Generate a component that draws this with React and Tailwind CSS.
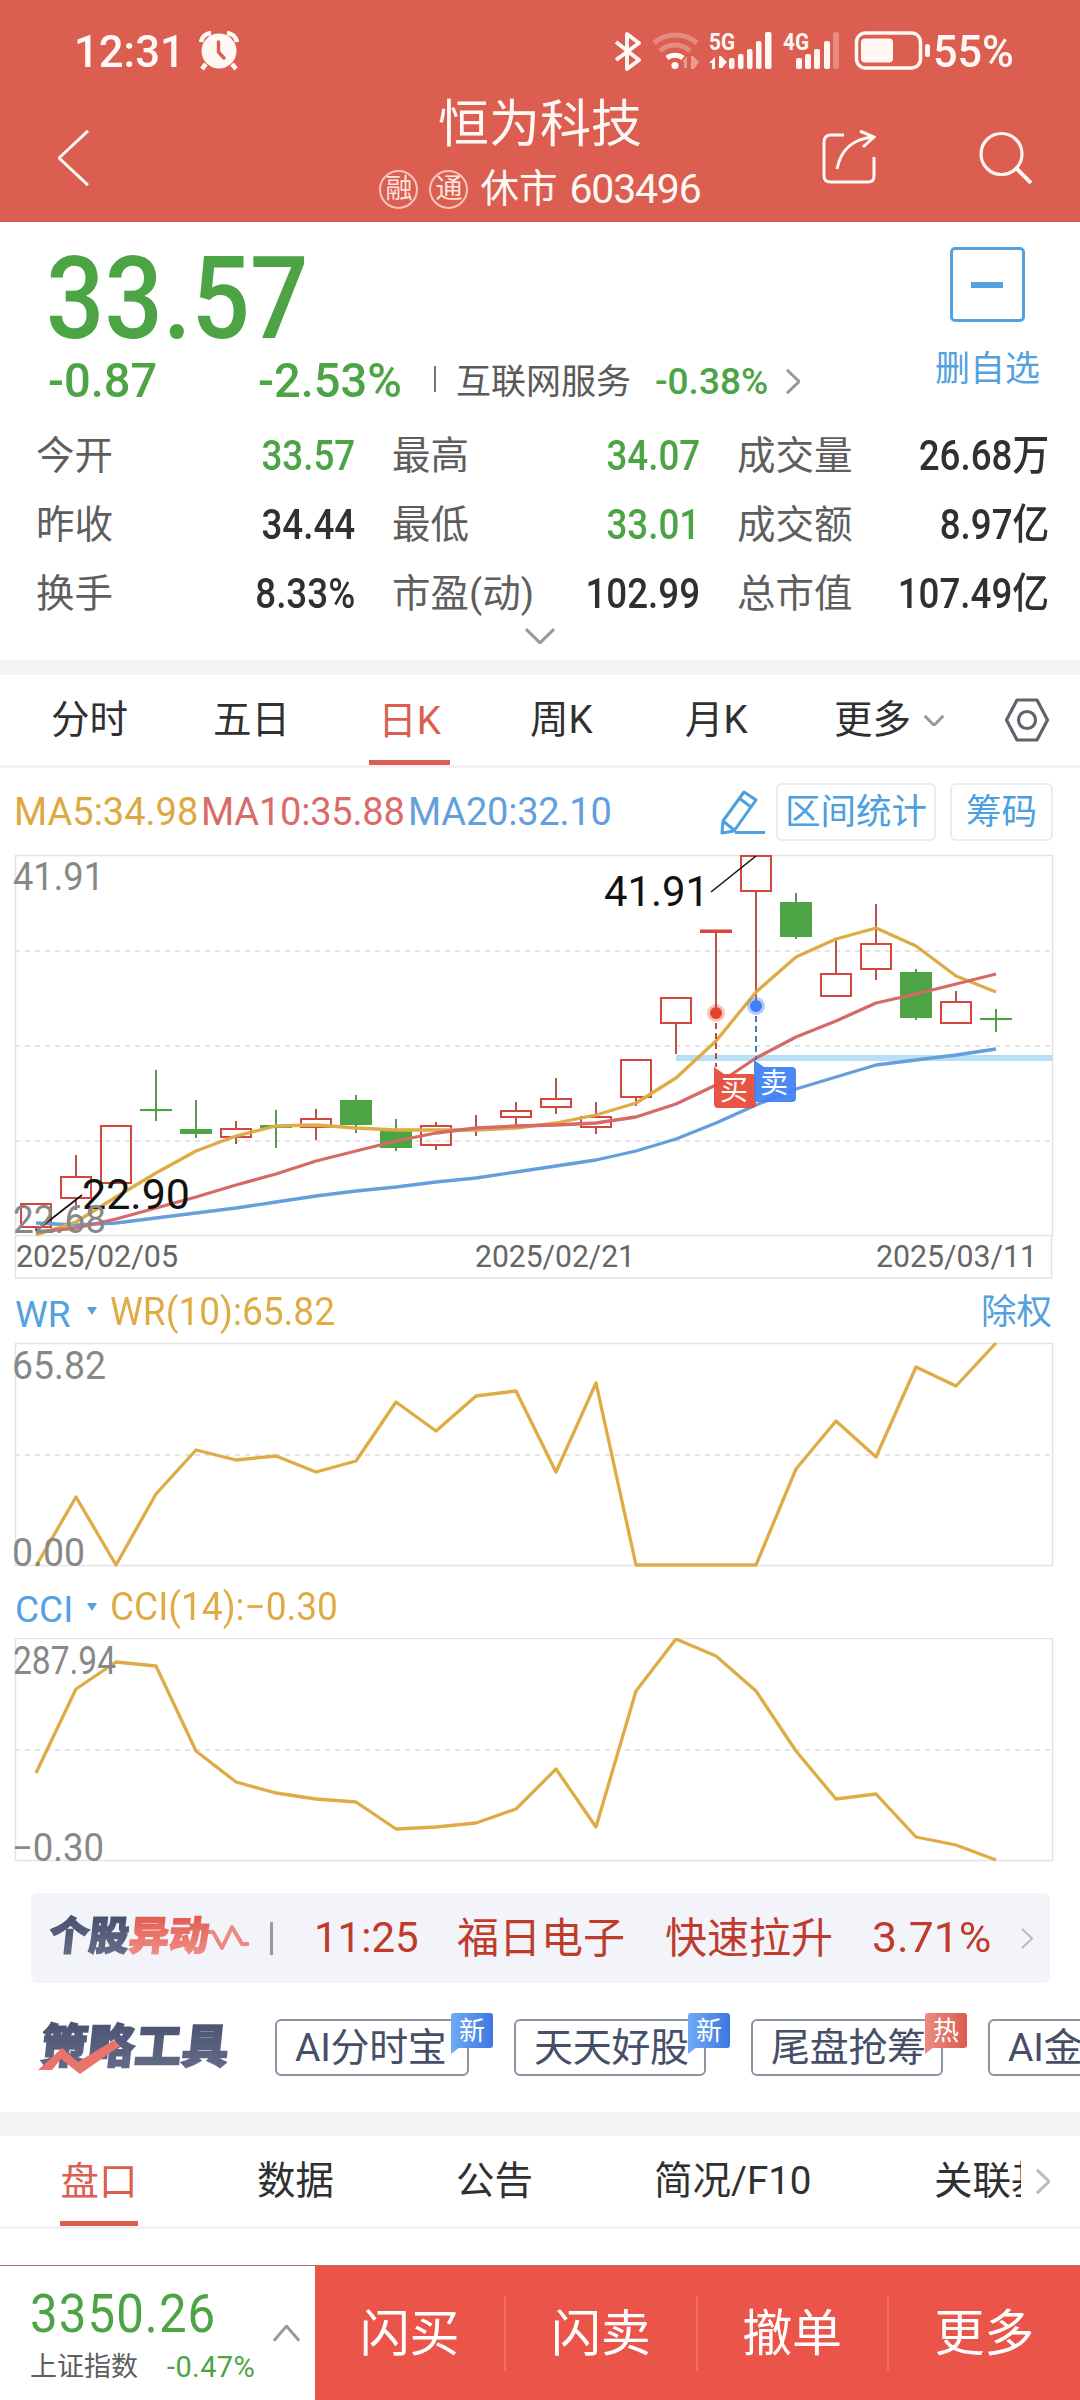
const candles = [
    { up: true, high: 1204, top: 1204, bottom: 1227, low: 1231 },
    { up: true, high: 1155, top: 1177, bottom: 1198, low: 1210 },
    { up: true, high: 1126, top: 1126, bottom: 1183, low: 1183 },
    { up: false, high: 1070, top: 1109, bottom: 1111, low: 1121 },
    { up: false, high: 1100, top: 1129, bottom: 1134, low: 1138 },
    { up: true, high: 1121, top: 1129, bottom: 1137, low: 1144 },
    { up: false, high: 1110, top: 1125, bottom: 1128, low: 1148 },
    { up: true, high: 1109, top: 1119, bottom: 1127, low: 1140 },
    { up: false, high: 1095, top: 1100, bottom: 1125, low: 1133 },
    { up: false, high: 1119, top: 1131, bottom: 1148, low: 1151 },
    { up: true, high: 1122, top: 1126, bottom: 1145, low: 1150 },
    { up: true, high: 1115, top: 1129, bottom: 1130, low: 1136 },
    { up: true, high: 1102, top: 1111, bottom: 1117, low: 1129 },
    { up: true, high: 1078, top: 1099, bottom: 1107, low: 1114 },
    { up: true, high: 1102, top: 1117, bottom: 1127, low: 1134 },
    { up: true, high: 1060, top: 1060, bottom: 1097, low: 1106 },
    { up: true, high: 998, top: 998, bottom: 1023, low: 1054 },
    { up: true, high: 931, top: 930.5, bottom: 932, low: 1013 },
    { up: true, high: 856, top: 856, bottom: 891, low: 1006 },
    { up: false, high: 893, top: 902, bottom: 937, low: 939 },
    { up: true, high: 939, top: 974, bottom: 996, low: 996 },
    { up: true, high: 904, top: 944, bottom: 969, low: 980 },
    { up: false, high: 969, top: 972, bottom: 1018, low: 1020 },
    { up: true, high: 991, top: 1002, bottom: 1023, low: 1023 },
    { up: false, high: 1009, top: 1018, bottom: 1020, low: 1032 },
];

const ma5 = [1235, 1222, 1197, 1173, 1151, 1136, 1126, 1125, 1128, 1130, 1130, 1130, 1128, 1123, 1115, 1103, 1078, 1041, 992, 957, 939, 928, 946, 976, 992];
const ma10 = [1232, 1228, 1219, 1208, 1197, 1185, 1174, 1161, 1151, 1141, 1133, 1128, 1126, 1125, 1123, 1117, 1104, 1085, 1058, 1037, 1021, 1003, 994, 984, 974];
const ma20 = [1223, 1225, 1223, 1218, 1213, 1208, 1202, 1196, 1191, 1187, 1182, 1178, 1172, 1166, 1160, 1151, 1139, 1123, 1105, 1089, 1077, 1065, 1060, 1055, 1049];
const wr = [1566, 1497, 1565, 1494, 1450, 1460, 1456, 1472, 1461, 1402, 1431, 1396, 1391, 1472, 1383, 1565, 1565, 1565, 1565, 1469, 1421, 1457, 1367, 1386, 1343];
const cci = [1773, 1689, 1662, 1666, 1751, 1782, 1793, 1799, 1802, 1829, 1827, 1823, 1809, 1769, 1827, 1691, 1639, 1656, 1691, 1751, 1799, 1794, 1837, 1845, 1860];

const xAt = (i) => 36 + 40 * i;
const toPoints = (values) => values.map((y, i) => `${xAt(i)},${y}`).join(" ");

const stats = [
    { label: "今开", value: "33.57", green: true },
    { label: "最高", value: "34.07", green: true },
    { label: "成交量", value: "26.68万" },
    { label: "昨收", value: "34.44" },
    { label: "最低", value: "33.01", green: true },
    { label: "成交额", value: "8.97亿" },
    { label: "换手", value: "8.33%" },
    { label: "市盈(动)", value: "102.99" },
    { label: "总市值", value: "107.49亿" },
];

const tools = [
    { name: "AI分时宝", tag: "新", width: "w-[194px]" },
    { name: "天天好股", tag: "新", width: "w-[192px]" },
    { name: "尾盘抢筹", tag: "热", hot: true, width: "w-[192px]" },
    { name: "AI金股", width: "w-[192px]" },
];

function Line({ values, color }) {
    return <polyline points={toPoints(values)} fill="none" stroke={color} strokeWidth="3.300" strokeLinejoin="round" />;
}

function ChartText({ x, y, w, size = 38, fill = "#888888", children }) {
    return (
        <text x={x} y={y} fontSize={size} fill={fill} textLength={w} lengthAdjust="spacingAndGlyphs">
            {children}
        </text>
    );
}

function Chevron({ d, className, width = 3 }) {
    return (
        <svg className={className} viewBox="0 0 30 30" preserveAspectRatio="none" fill="none" stroke="currentColor" strokeWidth={width}>
            <path d={d} vectorEffect="non-scaling-stroke" />
        </svg>
    );
}

function StatusBar() {
    return (
        <div className="flex h-[102px] shrink-0 items-center pl-[74px]">
            <span className="w-[107px] origin-left scale-x-[.97] text-[45px] leading-none font-medium">12:31</span>
            <svg className="ml-[18px] h-10 w-10" viewBox="0 0 40 40">
                <circle cx="20" cy="20" r="17.5" fill="#fff8f5" />
                <path d="M2 11A11 11 0 0 1 12 2M38 11A11 11 0 0 0 28 2" stroke="#fff8f5" strokeWidth="4.5" fill="none" />
                <path d="M7 33l-4 5M33 33l4 5" stroke="#fff8f5" strokeWidth="4.5" />
                <path d="M19.5 11v10l5.5 6" stroke="#db5e50" strokeWidth="3.4" fill="none" strokeLinecap="round" />
            </svg>
            {/* Bluetooth, wifi, both SIMs and battery */}
            <svg className="ml-[373px] h-[42px] w-[320px] overflow-visible" viewBox="612 30 320 42" fill="none" stroke="#fff8f5">
                <path d="M616 42l23 18-12 9V34l12 9-23 17" strokeWidth="4" strokeLinejoin="round" />
                <g opacity=".3" strokeWidth="5">
                    <path d="M654 43a33 33 0 0 1 43 0" />
                    <path d="M660 51a22 22 0 0 1 30 0" />
                </g>
                <path d="M667 58a13 13 0 0 1 16 0" strokeWidth="5" />
                <circle cx="675" cy="65.500" r="3.600" fill="#fff8f5" stroke="none" />
                <g fill="#fff8f5" stroke="none">
                    <path d="M682 62l5-6v12h-3v-6zM691 56h2l6 6-5 7h-3z" opacity=".4" />
                    <path d="M709 63l6-6v12h-3v-6zM719 56h2l6 6-5 6h-3z" />
                    <rect x="729" y="58" width="5.500" height="11" rx="2" />
                    <rect x="738" y="54" width="5.500" height="15" rx="2" />
                    <rect x="747" y="49" width="5.500" height="20" rx="2" />
                    <rect x="756" y="41" width="5.500" height="28" rx="2" />
                    <rect x="765" y="32" width="6.500" height="37" rx="2" />
                    <rect x="796" y="58" width="6" height="11" rx="2" />
                    <rect x="805" y="54" width="6" height="15" rx="2" />
                    <rect x="814" y="49" width="6" height="20" rx="2" />
                    <rect x="824" y="41" width="6" height="28" rx="2" />
                    <rect x="833" y="32" width="6" height="37" rx="2" opacity=".3" />
                    <rect x="861" y="38.500" width="32" height="24" rx="4" />
                    <rect x="925" y="44" width="5" height="13" rx="2.500" />
                    <text x="709" y="50" fontSize="24" fontWeight="700" textLength="26" lengthAdjust="spacingAndGlyphs">5G</text>
                    <text x="783" y="50" fontSize="24" fontWeight="700" textLength="26" lengthAdjust="spacingAndGlyphs">4G</text>
                </g>
                <rect x="856.500" y="33" width="64" height="35" rx="9" strokeWidth="3.500" />
            </svg>
            <span className="ml-[1px] origin-left scale-x-[.96] text-[45px] leading-none font-medium">55%</span>
        </div>
    );
}

function Header() {
    return (
        <header className="flex h-[222px] flex-col bg-[#db5e50] text-[#fff8f5]">
            <StatusBar />
            <div className="grid h-[120px] grid-cols-[1fr_auto_1fr]">
                <Chevron d="M29 1L1 15L29 29" className="mt-[27px] ml-[58px] h-[58px] w-[31px]" />
                <div className="flex flex-col items-center">
                    <h1 className="mt-[-3px] text-[51px] leading-[52px]">恒为科技</h1>
                    <div className="mt-[18px] flex items-center text-[38.5px] leading-[40px]">
                        <span className="mr-[11px] flex h-[39px] w-[39px] items-center justify-center rounded-full border-2 border-[#f5c6be] text-[27px] leading-none text-[#fbe3de]">融</span>
                        <span className="mr-[12px] flex h-[39px] w-[39px] items-center justify-center rounded-full border-2 border-[#f5c6be] text-[27px] leading-none text-[#fbe3de]">通</span>
                        休市
                        <span className="ml-[12px] text-[41px] tracking-[-1.2px]">603496</span>
                    </div>
                </div>
                <div className="flex justify-end gap-[102px] pt-[28px] pr-[48px]">
                    <svg className="h-[54px] w-[54px]" viewBox="0 0 54 54" fill="none" stroke="currentColor" strokeWidth="3">
                        <path d="M22 5H9q-7 0-7 7v34q0 6 7 6h37q6 0 6-6V27" />
                        <path d="M15 39C18 24 26 9 52 7M38 1l14 6-11 10" />
                    </svg>
                    <svg className="h-[54px] w-[54px]" viewBox="0 0 54 54" fill="none" stroke="currentColor" strokeWidth="3.200">
                        <circle cx="23.500" cy="24" r="20.500" />
                        <path d="M38 38l15 15" strokeWidth="4" />
                    </svg>
                </div>
            </div>
        </header>
    );
}

function Quote() {
    return (
        <section className="h-[438px]">
            <div className="flex h-[199px] justify-between pr-[40px] pl-[46px]">
                <div className="text-[#4ca445]">
                    <div className="mt-[20px] h-[114px] origin-left scale-x-[.895] text-[115px] leading-[114px] font-medium">33.57</div>
                    <div className="mt-[1px] flex h-[46px] items-center">
                        <span className="ml-[2px] w-[210px] origin-left scale-x-[.96] text-[49px] leading-none font-medium">-0.87</span>
                        <span className="w-[176px] origin-left scale-x-[.96] text-[49px] leading-none font-medium">-2.53%</span>
                        <span className="mt-[-2px] h-[26px] w-[2px] bg-[#777]" />
                        <span className="mt-[4px] ml-[20px] text-[35px] leading-none text-[#5a5a5a]">互联网服务</span>
                        <span className="mt-[2px] ml-[24px] w-[120px] origin-left text-[37px] leading-none font-medium">-0.38%</span>
                        <Chevron d="M2 1L28 15L2 29" className="mt-[2px] ml-[11px] h-[25px] w-[14px] text-[#999]" />
                    </div>
                </div>
                <div className="flex flex-col items-center pt-[25px] text-[#53a1de]">
                    <div className="flex h-[75px] w-[75px] items-center justify-center rounded-[5px] border-3">
                        <span className="h-[6px] w-[32px] bg-[#53a1de]" />
                    </div>
                    <span className="mt-[30px] text-[35px] leading-[36px]">删自选</span>
                </div>
            </div>
            <div className="grid h-[207px] grid-cols-[319px_308px_312px] grid-rows-[69px_69px_69px] gap-x-[37px] pl-[36px] text-[38.5px] text-[#5e5e5e]">
                {stats.map((item) => (
                    <div key={item.label} className="flex items-center justify-between leading-[60px] whitespace-nowrap">
                        <span>{item.label}</span>
                        <span className={`origin-right scale-x-[.875] text-[42px] font-medium ${item.green ? "text-[#4ca445]" : "text-[#303030]"}`}>{item.value}</span>
                    </div>
                ))}
            </div>
            <Chevron d="M1 2L15 28L29 2" className="mx-auto h-[16px] w-[30px] text-[#999]" />
        </section>
    );
}

function PeriodTabs() {
    return (
        <nav className="flex h-[93px] items-center border-b-3 border-[#f2f2f2] text-[38.5px] leading-[92px] text-[#303030]">
            <span className="ml-[51px] w-[162px]">分时</span>
            <span className="w-[156px]">五日</span>
            <span className="flex h-[90px] w-[81px] justify-center border-b-[5px] border-[#db5e50] text-[#db5e50]">日K</span>
            <span className="ml-[80px] w-[155px]">周K</span>
            <span className="w-[149px]">月K</span>
            <span>更多</span>
            <Chevron d="M1 2L15 28L29 2" className="ml-[13px] h-[11px] w-[20px] text-[#999]" />
            <svg className="ml-[61px] h-[44px] w-[44px]" viewBox="0 0 44 44" fill="none" stroke="#62626e" strokeWidth="3.200" strokeLinejoin="round">
                <path d="M12 2h20l10.500 20L32 42H12L1.500 22z" />
                <circle cx="22" cy="22" r="8.500" />
            </svg>
        </nav>
    );
}

function PriceChart() {
    return (
        <section>
            <div className="flex h-[87px] items-center pl-[14px] text-[38px] leading-none">
                <span className="w-[187px] text-[#dda93f]">MA5:34.98</span>
                <span className="w-[207px] tracking-[-.2px] text-[#db6b69]">MA10:35.88</span>
                <span className="w-[311px] tracking-[-.2px] text-[#629fdc]">MA20:32.10</span>
                <svg className="h-[46px] w-[46px]" viewBox="0 0 46 46" fill="none" stroke="#4ca0e0" strokeWidth="3" strokeLinejoin="round">
                    <path d="M25 3l12 8-22 31-12 2 1-12zM4 32l11 9M20 9l12 9" />
                    <path d="M16 43.500h30" />
                </svg>
                <button className="ml-[11px] h-[58px] w-[160px] rounded-[6px] border-2 border-[#ececec] text-[35.5px] leading-[54px] text-[#4ca0e0]">区间统计</button>
                <button className="ml-[14px] h-[58px] w-[103px] rounded-[6px] border-2 border-[#ececec] text-[35.5px] leading-[54px] text-[#4ca0e0]">筹码</button>
            </div>
            <svg className="block h-[424px] w-[1080px] overflow-visible" viewBox="0 855 1080 424">
                <g fill="none" stroke="#e4e4e4" strokeWidth="1.500">
                    <rect x="15.500" y="855.500" width="1037" height="380" />
                    <path d="M15.500 1235.500v42.500h1036v-42.500" />
                    <path d="M15 951H1052M15 1046H1052M15 1141H1052" strokeWidth="2" strokeDasharray="5 5" />
                </g>
                {candles.map((c, i) => {
                    const color = c.up ? "#d5463d" : "#4ca445";
                    return (
                        <g key={i} stroke={color} strokeWidth="2" fill={c.up ? "none" : color}>
                            <path d={`M${xAt(i)} ${c.high}V${c.top}M${xAt(i)} ${c.bottom}V${c.low}`} stroke={c.up ? "#b5534c" : "#559a50"} />
                            <rect x={xAt(i) - 15} y={c.top + (c.up ? 0 : 1)} width="30" height={Math.max(c.bottom - c.top - (c.up ? 0 : 2), 0.1)} />
                        </g>
                    );
                })}
                <rect x="676" y="1055" width="377" height="6" fill="#b7dff5" />
                <Line values={ma20} color="#659fdb" />
                <Line values={ma5} color="#dfab45" />
                <Line values={ma10} color="#d66a67" />

                {/* Buy and sell markers */}
                <path d="M716 1013V1067" stroke="#c8463c" strokeWidth="2" strokeDasharray="6 4" />
                <path d="M756 1006V1060" stroke="#4479bd" strokeWidth="2" strokeDasharray="6 4" />
                <circle cx="716" cy="1013" r="9" fill="#e8432e" opacity=".3" />
                <circle cx="716" cy="1013" r="6" fill="#e8432e" />
                <circle cx="756" cy="1006" r="9" fill="#4080f4" opacity=".4" />
                <circle cx="756" cy="1006" r="6" fill="#4080f4" />
                <path d="M714 1067l10 7h28q4 0 4 4v26q0 4-4 4h-34q-4 0-4-4z" fill="#e84c3b" opacity=".95" />
                <path d="M754 1060l10 7h28q4 0 4 4v27q0 4-4 4h-34q-4 0-4-4z" fill="#4080f4" opacity=".93" />
                <text x="720" y="1100" fontSize="28" fill="#fff">买</text>
                <text x="760" y="1093" fontSize="28" fill="#fff">卖</text>

                <path d="M711 892L756 856M36 1231L82 1195" stroke="#111" strokeWidth="1.600" />
                <ChartText x={604} y={906} w={105} size={42} fill="#111111">41.91</ChartText>
                <ChartText x={82} y={1209} w={108} size={42} fill="#111111">22.90</ChartText>
                <ChartText x={13} y={890} w={91}>41.91</ChartText>
                <ChartText x={13} y={1233} w={93}>22.68</ChartText>
                <ChartText x={16} y={1267} w={162} size={32} fill="#666666">2025/02/05</ChartText>
                <ChartText x={475} y={1267} w={160} size={32} fill="#666666">2025/02/21</ChartText>
                <ChartText x={876} y={1267} w={161} size={32} fill="#666666">2025/03/11</ChartText>
            </svg>
        </section>
    );
}

function IndicatorTitle({ name, value, action }) {
    return (
        <div className="flex h-full items-center pr-[28px] pl-[15px] text-[38px] leading-none text-[#53a1de]">
            <span className="w-[72px] pt-[6px] text-[37px]">{name}</span>
            <svg className="h-[8px] w-[10px]" viewBox="0 0 10 8" fill="currentColor">
                <path d="M0 0h10L5 8z" />
            </svg>
            <span className="ml-[13px] origin-left scale-x-[.975] pt-[1px] text-[#dfab45]">{value}</span>
            {action && <span className="ml-auto pt-[3px] text-[35.5px]">{action}</span>}
        </div>
    );
}

function Indicators() {
    return (
        <section>
            <div className="h-[64px]">
                <IndicatorTitle name="WR" value="WR(10):65.82" action="除权" />
            </div>
            <svg className="block h-[225px] w-[1080px] overflow-visible" viewBox="0 1343 1080 225">
                <rect x="15.500" y="1343.500" width="1037" height="222" fill="none" stroke="#e4e4e4" strokeWidth="1.500" />
                <path d="M15 1455H1052" stroke="#e4e4e4" strokeWidth="2" strokeDasharray="5 5" />
                <Line values={wr} color="#dfab45" />
                <ChartText x={12} y={1379} w={94}>65.82</ChartText>
                <ChartText x={12} y={1566} w={73}>0.00</ChartText>
            </svg>
            <div className="h-[70px] pt-[7px]">
                <IndicatorTitle name="CCI" value="CCI(14):−0.30" />
            </div>
            <svg className="block h-[255px] w-[1080px]" viewBox="0 1638 1080 255">
                <rect x="15.500" y="1638.500" width="1037" height="222" fill="none" stroke="#e4e4e4" strokeWidth="1.500" />
                <path d="M15 1750H1052" stroke="#e4e4e4" strokeWidth="2" strokeDasharray="5 5" />
                <Line values={cci} color="#dfab45" />
                <ChartText x={13} y={1674} w={103}>287.94</ChartText>
                <ChartText x={12} y={1861} w={92}>−0.30</ChartText>
            </svg>
        </section>
    );
}

function MoveAlert() {
    return (
        <div className="mx-[31px] flex h-[90px] w-[1019px] items-center rounded-[6px] bg-[#f3f4f9] text-[42px] leading-none whitespace-nowrap text-[#bf3b2c]">
            <div className="mt-[-2px] ml-[18px] flex w-[160px] -skew-x-6 text-[40px] leading-[46px] font-black text-transparent [-webkit-text-stroke:1.5px_transparent]">
                <span className="bg-gradient-to-b from-[#464f6e] to-[#69718d] bg-clip-text">个股</span>
                <span className="bg-gradient-to-b from-[#e0594f] to-[#f0938b] bg-clip-text">异动</span>
            </div>
            <svg className="ml-[-1px] h-[28px] w-[42px]" viewBox="0 0 42 28" fill="none" stroke="#ec8982" strokeWidth="4" strokeLinejoin="round">
                <path d="M0 8h5l9 16L24 3l10 17h7" />
            </svg>
            <span className="ml-[20px] h-[33px] w-[3px] bg-[#999]" />
            <span className="ml-[41px] w-[143px]">11:25</span>
            <span className="w-[208px] pt-[2px]">福日电子</span>
            <span className="w-[207px] pt-[2px]">快速拉升</span>
            <span className="origin-left scale-x-[1.06]">3.71%</span>
            <Chevron d="M2 1L28 15L2 29" className="ml-auto mr-[17px] h-[21px] w-[12px] text-[#bbb]" width={2} />
        </div>
    );
}

function ToolRow() {
    return (
        <div className="mt-[30px] flex h-[99px] overflow-hidden pl-[38px]">
            <div className="relative h-[62px] w-[237px] shrink-0">
                <span className="ml-[3px] inline-block -skew-x-6 bg-gradient-to-b from-[#464f6e] to-[#69718d] bg-clip-text text-[47px] leading-[68px] font-black text-transparent [-webkit-text-stroke:1.5px_transparent]">策略工具</span>
                <svg className="absolute top-[27px] left-0 h-[34px] w-[84px]" viewBox="0 0 84 34" fill="#e9746b">
                    <path d="M0 30L24 8L40 22L76 0L82 6L42 34L23 19L14 30z" />
                </svg>
            </div>
            {tools.map((tool) => (
                <div key={tool.name} className={`relative mt-[6px] mr-[45px] h-[57px] shrink-0 rounded-[6px] border-2 border-[#8c93a3] pl-[19px] text-[39px] leading-[55px] tracking-[-.3px] whitespace-nowrap text-[#474e68] ${tool.width}`}>
                    <span className="ml-[-1px]">{tool.name}</span>
                    {tool.tag && (
                        <span className="absolute top-[-8px] right-[-26px] h-[35px] w-[42px] tracking-normal">
                            <span className={`absolute bottom-[-6px] left-0 h-[14px] w-[9px] [clip-path:polygon(0_0,100%_0,100%_50%,0_100%)] ${tool.hot ? "bg-[#ea8b80]" : "bg-[#70abf5]"}`} />
                            <span className={`relative block h-[35px] rounded-[3px] bg-gradient-to-r text-center text-[26px] leading-[36px] text-white ${tool.hot ? "from-[#ea8b80] to-[#dc5b4d]" : "from-[#70abf5] to-[#3e76e0]"}`}>
                                {tool.tag}
                            </span>
                        </span>
                    )}
                </div>
            ))}
        </div>
    );
}

function DetailTabs() {
    return (
        <nav className="flex h-[93px] items-center border-b-3 border-[#f2f2f2] text-[38.5px] leading-[92px] whitespace-nowrap text-[#303030]">
            <span className="ml-[60px] flex h-[90px] w-[78px] justify-center border-b-[5px] border-[#db5e50] text-[#db5e50]">盘口</span>
            <span className="ml-[119px] w-[199px]">数据</span>
            <span className="w-[198px]">公告</span>
            <span className="w-[280px]">简况/F10</span>
            <span className="w-[87px] overflow-hidden">关联基金</span>
            <Chevron d="M2 1L28 15L2 29" className="ml-[15px] h-[25px] w-[14px] text-[#bbb]" />
        </nav>
    );
}

function TradeBar() {
    return (
        <footer className="mt-[36px] flex h-[135px] border-t border-[#b96f66] bg-[#eb5549]">
            <div className="flex w-[315px] items-center bg-white pl-[30px]">
                <div className="w-[243px]">
                    <div className="mt-[2px] origin-left scale-x-[.91] text-[54px] leading-[60px] text-[#4ca445]">
                        <span className="tracking-[1.2px]">3350.26</span>
                    </div>
                    <div className="mt-[6px] flex items-center text-[27px] leading-[34px] whitespace-nowrap text-[#5e5e5e]">
                        上证指数
                        <span className="ml-[29px] text-[29px] tracking-[.4px] text-[#4ca445]">-0.47%</span>
                    </div>
                </div>
                <Chevron d="M1 28L15 2L29 28" className="h-[17px] w-[27px] text-[#999]" />
            </div>
            {["闪买", "闪卖", "撤单", "更多"].map((label, i) => (
                <button key={label} className="flex h-full flex-1 items-center text-[50px] text-white">
                    <span className="flex-1 pt-[2px] text-center">{label}</span>
                    {i < 3 && <span className="h-[75px] w-[2px] bg-[#f07065]" />}
                </button>
            ))}
        </footer>
    );
}

export default function App() {
    return (
        <div className="h-[2400px] w-[1080px] overflow-hidden bg-white font-['Roboto','Noto_Sans_CJK_SC',sans-serif]">
            <Header />
            <Quote />
            <div className="h-[15px] bg-[#f4f4f4]" />
            <PeriodTabs />
            <PriceChart />
            <Indicators />
            <MoveAlert />
            <ToolRow />
            <div className="h-[24px] bg-[#f4f4f4]" />
            <DetailTabs />
            <TradeBar />
        </div>
    );
}
